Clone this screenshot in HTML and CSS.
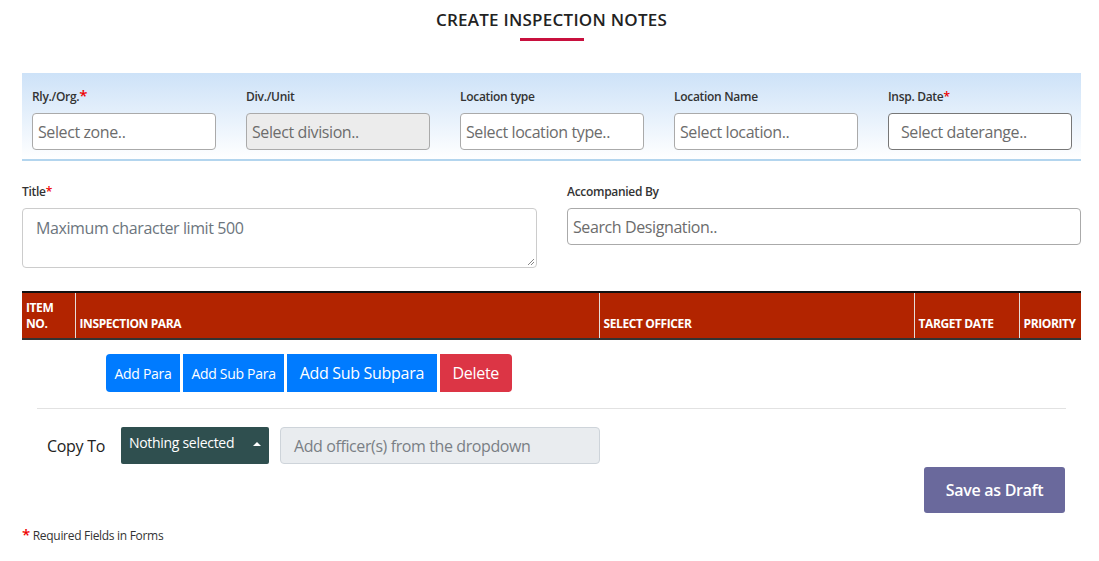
FILE: index.html
```html
<!DOCTYPE html>
<html>
<head>
<meta charset="utf-8">
<link rel="stylesheet" href="styles.css">
</head>
<body>
<div class="page">
  <h1 class="page-title">CREATE INSPECTION NOTES</h1>
  <div class="title-bar"></div>

  <div class="filter-panel">
    <div class="field">
      <label class="lbl">Rly./Org.<span class="req big">*</span></label>
      <div class="inp">Select zone..</div>
    </div>
    <div class="field">
      <label class="lbl">Div./Unit</label>
      <div class="inp disabled">Select division..</div>
    </div>
    <div class="field">
      <label class="lbl">Location type</label>
      <div class="inp">Select location type..</div>
    </div>
    <div class="field">
      <label class="lbl">Location Name</label>
      <div class="inp">Select location..</div>
    </div>
    <div class="field">
      <label class="lbl">Insp. Date<span class="req">*</span></label>
      <div class="inp date">Select daterange..</div>
    </div>
  </div>

  <div class="row-two">
    <div class="field">
      <label class="lbl">Title<span class="req">*</span></label>
      <div class="textarea">Maximum character limit 500
        <svg class="grip" width="8" height="8" viewBox="0 0 8 8"><path d="M7 1L1 7M7 4L4 7" stroke="#888" stroke-width="1"/></svg>
      </div>
    </div>
    <div class="field">
      <label class="lbl">Accompanied By</label>
      <div class="inp">Search Designation..</div>
    </div>
  </div>

  <table class="grid">
    <thead>
      <tr>
        <th class="c1">ITEM<br>NO.</th>
        <th class="c2">INSPECTION PARA</th>
        <th class="c3">SELECT OFFICER</th>
        <th class="c4">TARGET DATE</th>
        <th class="c5">PRIORITY</th>
      </tr>
    </thead>
  </table>

  <div class="btns">
    <button class="btn blue sm first">Add Para</button>
    <button class="btn blue sm">Add Sub Para</button>
    <button class="btn blue">Add Sub Subpara</button>
    <button class="btn red last">Delete</button>
  </div>

  <hr class="sep">

  <div class="copy-row">
    <span class="copy-lbl">Copy To</span>
    <div class="dd">Nothing selected <span class="caret"></span></div>
    <div class="inp officer">Add officer(s) from the dropdown</div>
  </div>

  <div class="save-row">
    <button class="btn save">Save as Draft</button>
  </div>

  <p class="note"><span class="req">*</span> Required Fields in Forms</p>
</div>
</body>
</html>
```

FILE: styles.css
```css
* { box-sizing: border-box; }
body {
  margin: 0;
  font-family: "Open Sans", "Noto Sans", sans-serif;
  color: #212529;
  background: #fff;
}
.page {
  padding: 0 18px 0 22px;
}
.page-title {
  margin: 0;
  padding-top: 9px;
  text-align: center;
  font-size: 17px;
  font-weight: 600;
  color: #222;
  letter-spacing: 0.25px;
  line-height: 22px;
}
.title-bar {
  width: 64px;
  height: 3px;
  background: #c8103e;
  margin: 7px auto 0;
}
.filter-panel {
  margin-top: 32px;
  background: linear-gradient(to bottom, #cde2f8 0%, #ffffff 100%);
  border-bottom: 2px solid #b3d5ee;
  padding: 16px 10px 9px;
  display: grid;
  grid-template-columns: repeat(5, 184px);
  column-gap: 30px;
}
.field { display: flex; flex-direction: column; }
.lbl {
  font-size: 12px;
  font-weight: 600;
  color: #333;
  line-height: 16px;
  height: 16px;
  margin-bottom: 8px;
  letter-spacing: -0.3px;
}
.req { color: #e00; font-weight: 600; }
.req.big { font-size: 15px; line-height: 10px; }
.inp {
  height: 37px;
  border: 1px solid #aaa;
  border-radius: 4px;
  background: #fff;
  font-size: 16px;
  color: #6c6c6c;
  padding: 0 5px;
  display: flex;
  align-items: center;
  letter-spacing: -0.4px;
  white-space: nowrap;
  overflow: hidden;
}
.inp.disabled { background: #ececec; }
.inp.date { border-color: #777; padding-left: 12px; }
.row-two {
  margin-top: 23px;
  display: grid;
  grid-template-columns: 515px 514px;
  column-gap: 30px;
}
.row-two .lbl { margin-bottom: 8px; }
.textarea {
  position: relative;
  height: 60px;
  border: 1px solid #ccc;
  border-radius: 4px;
  font-size: 16px;
  color: #6c757d;
  padding: 8px 13px;
  letter-spacing: -0.4px;
}
.grip { position: absolute; right: 1px; bottom: 1px; }
.row-two .inp { border-color: #aaa; }
.grid {
  margin-top: 23px;
  width: 1059px;
  border-collapse: collapse;
}
.grid th {
  background: #b22400;
  color: #fff;
  font-size: 12px;
  font-weight: 700;
  text-align: left;
  vertical-align: bottom;
  padding: 4px 4px 6px;
  line-height: 16px;
  height: 47px;
  border-top: 2px solid #111;
  border-bottom: 2px solid #333;
  border-left: 1px solid #e6dcd8;
  letter-spacing: -0.4px;
}
.grid th:first-child { border-left: none; }
.c1 { width: 53px; }
.c2 { width: 524px; }
.c3 { width: 315px; }
.c4 { width: 105px; }
.c5 { width: 62px; }
.btns {
  margin-top: 14px;
  padding-left: 84px;
  display: flex;
  gap: 3px;
}
.btn {
  border: none;
  font-family: inherit;
  color: #fff;
  height: 38px;
  font-size: 16px;
  padding: 0 12.5px;
  cursor: pointer;
  letter-spacing: -0.3px;
}
.btn.sm { font-size: 14px; padding: 0 8.5px; }
.btn.blue { background: #007bff; }
.btn.red { background: #dc3545; padding: 0 13px; border-radius: 0 4px 4px 0; }
.btn.first { border-radius: 4px 0 0 4px; }
.sep {
  margin: 16px 15px 0;
  border: none;
  border-top: 1px solid #e2e2e2;
}
.copy-row {
  margin-top: 18px;
  padding-left: 25px;
  display: flex;
  align-items: center;
}
.copy-lbl {
  font-size: 16px;
  color: #222;
  width: 74px;
  letter-spacing: -0.3px;
}
.dd {
  width: 148px;
  height: 37px;
  background: #2f4f4f;
  color: #fff;
  font-size: 14px;
  padding: 6px 8px;
  border-radius: 2px;
  display: flex;
  justify-content: space-between;
  align-items: flex-start;
  letter-spacing: -0.3px;
}
.caret {
  margin-top: 9px;
  width: 0; height: 0;
  border-left: 4px solid transparent;
  border-right: 4px solid transparent;
  border-bottom: 4px solid #fff;
}
.inp.officer {
  margin-left: 11px;
  width: 320px;
  background: #e9ecef;
  border-color: #ced4da;
  color: #7a7f85;
  padding-left: 13px;
}
.save-row {
  display: flex;
  justify-content: flex-end;
  margin-top: 3px;
  padding-right: 16px;
}
.btn.save {
  background: #6a699c;
  height: 46px;
  width: 141px;
  font-weight: 600;
  border-radius: 3px;
}
.note {
  margin: 11px 0 0;
  font-size: 12px;
  color: #333;
  letter-spacing: -0.3px;
}
.note .req { font-size: 15px; }
```
